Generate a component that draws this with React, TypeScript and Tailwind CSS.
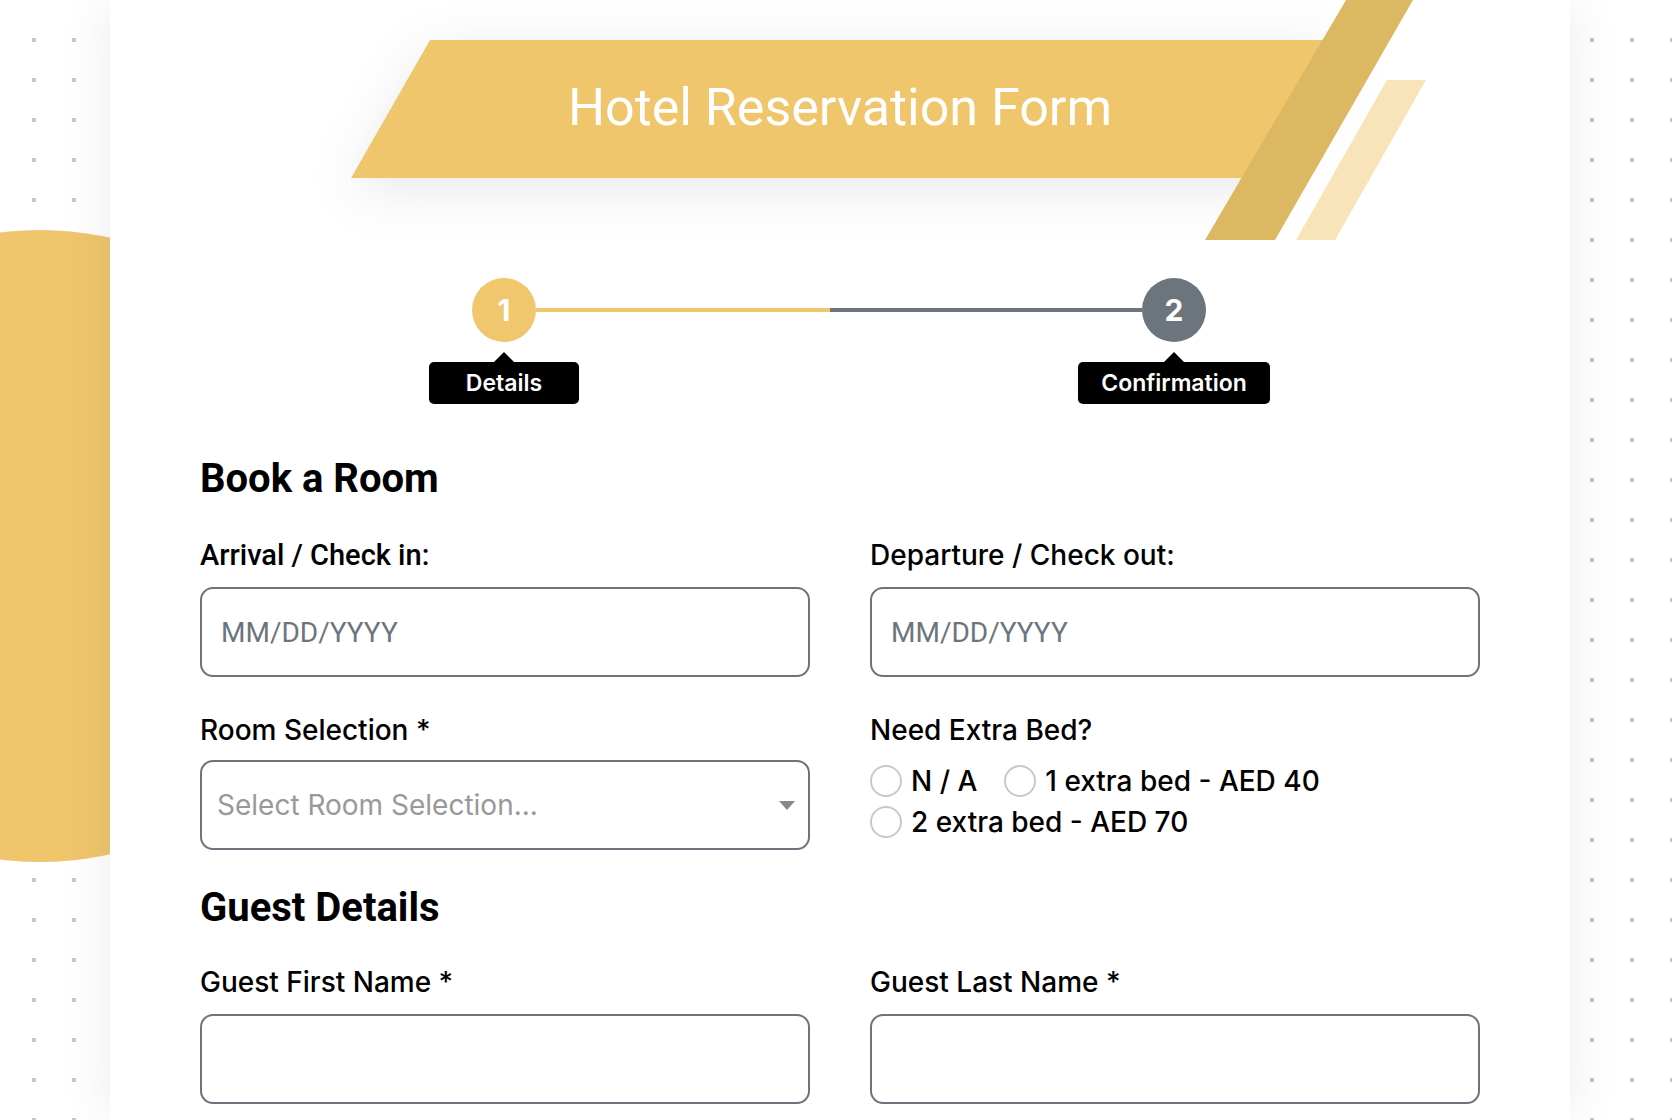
const rows = Array.from({ length: 28 }, (_, i) => i);

const DotGrid = ({ cols }: { cols: number }) => (
  <div
    className={
      cols === 2
        ? "grid w-max grid-cols-2 gap-[36px]"
        : "grid w-max grid-cols-3 gap-[36px]"
    }
  >
    {rows.flatMap((r) =>
      Array.from({ length: cols }, (_, c) => (
        <span key={`${r}-${c}`} className="block size-1 bg-[#c8c5c8]" />
      ))
    )}
  </div>
);

const Tooltip = ({ label, width }: { label: string; width: string }) => (
  <div className="flex flex-col items-center">
    <div className="h-0 w-0 border-x-[10px] border-b-[10px] border-x-transparent border-b-black" />
    <div
      className={`flex h-[42px] ${width} items-center justify-center rounded-[5px] bg-black text-[23px] font-semibold text-white`}
    >
      {label}
    </div>
  </div>
);

const Label = ({ children, roboto }: { children: React.ReactNode; roboto?: boolean }) => (
  <label
    className={
      roboto
        ? "block font-['Roboto',sans-serif] text-[29px] font-medium leading-[34px] text-black"
        : "block text-[28px] font-medium leading-[34px] text-black"
    }
  >
    {children}
  </label>
);

const TextInput = ({ placeholder }: { placeholder?: string }) => (
  <input
    className="mt-[15px] block h-[90px] w-full rounded-[13px] border-2 border-[#6c757d] bg-white px-[19px] font-['Roboto',sans-serif] text-[28px] text-black outline-none placeholder:text-[#6c757d]"
    placeholder={placeholder}
  />
);

const Radio = ({ label }: { label: string }) => (
  <label className="flex h-[41px] items-center gap-[9px]">
    <span className="block size-8 rounded-full border-2 border-[#c6c9cd] bg-white" />
    <span className="text-[28px] font-medium text-black">{label}</span>
  </label>
);

export default function App() {
  return (
    <div className="flex h-[1120px] overflow-hidden bg-white font-['Inter',sans-serif]">
      {/* LEFT GUTTER */}
      <div className="relative w-[110px] shrink-0 overflow-hidden pl-[32px] pt-[38px]">
        <DotGrid cols={2} />
        <div className="absolute left-[-276px] top-[230px] size-[632px] rounded-full bg-[#efc66c]" />
      </div>

      {/* CARD */}
      <div className="relative z-10 w-[1460px] shrink-0 bg-white shadow-[0_0_50px_rgba(0,0,0,0.08)]">
        {/* HEADER */}
        <div className="relative h-[240px]">
          <svg
            className="absolute left-0 top-0 overflow-visible"
            width="1460"
            height="240"
            viewBox="0 0 1460 240"
          >
            <defs>
              <filter id="bannerShadow" x="-20%" y="-80%" width="140%" height="260%">
                <feDropShadow dx="0" dy="12" stdDeviation="26" floodColor="#000" floodOpacity="0.09" />
              </filter>
            </defs>
            <polygon points="320,40 1240,40 1160,178 241,178" fill="#efc66c" filter="url(#bannerShadow)" />
            <polygon points="1236,0 1303,0 1165,240 1095,240" fill="#dcb862" />
            <polygon points="1277,80 1316,80 1225,240 1186,240" fill="#f8e4b8" />
          </svg>
          <h1 className="relative pt-[82px] text-center font-['Roboto',sans-serif] text-[52px] font-normal leading-[52px] text-white">
            Hotel Reservation Form
          </h1>
        </div>

        <div className="px-[90px]">
          {/* STEPS */}
          <div className="ml-[272px] mt-[38px] w-[734px]">
            <div className="flex items-center">
              <div className="flex size-16 items-center justify-center rounded-full bg-[#f0c76d] text-[30px] font-bold text-white">
                1
              </div>
              <div className="h-1 w-[294px] bg-[#f0c76d]" />
              <div className="h-1 flex-1 bg-[#6c757d]" />
              <div className="flex size-16 items-center justify-center rounded-full bg-[#6c757d] text-[30px] font-bold text-white">
                2
              </div>
            </div>
            <div className="mt-[10px] flex justify-between">
              <div className="-ml-[43px]">
                <Tooltip label="Details" width="w-[150px]" />
              </div>
              <div className="-mr-[64px]">
                <Tooltip label="Confirmation" width="w-[192px]" />
              </div>
            </div>
          </div>

          {/* BOOK A ROOM */}
          <h2 className="mt-[51px] font-['Roboto',sans-serif] text-[40px] font-bold leading-[48px] text-black">
            Book a Room
          </h2>

          <div className="mt-[35px] grid grid-cols-2 gap-x-[60px]">
            <div>
              <Label roboto>Arrival / Check in:</Label>
              <TextInput placeholder="MM/DD/YYYY" />
            </div>
            <div>
              <Label>Departure / Check out:</Label>
              <TextInput placeholder="MM/DD/YYYY" />
            </div>
          </div>

          <div className="mt-[36px] grid grid-cols-2 gap-x-[60px]">
            <div>
              <Label>Room Selection *</Label>
              <div className="mt-[13px] flex h-[90px] items-center justify-between rounded-[13px] border-2 border-[#6c757d] pl-[15px] pr-[13px]">
                <span className="text-[28px] text-[#999999]">Select Room Selection...</span>
                <svg width="16" height="9" viewBox="0 0 16 9">
                  <polygon points="0,0 16,0 8,9" fill="#888888" />
                </svg>
              </div>
            </div>
            <div>
              <Label>Need Extra Bed?</Label>
              <div className="mt-[13px] flex flex-wrap gap-x-[27px]">
                <Radio label="N / A" />
                <Radio label="1 extra bed - AED 40" />
                <Radio label="2 extra bed - AED 70" />
              </div>
            </div>
          </div>

          {/* GUEST DETAILS */}
          <h2 className="mt-[34px] font-['Roboto',sans-serif] text-[40px] font-bold leading-[48px] text-black">
            Guest Details
          </h2>

          <div className="mt-[33px] grid grid-cols-2 gap-x-[60px]">
            <div>
              <Label>Guest First Name *</Label>
              <TextInput />
            </div>
            <div>
              <Label>Guest Last Name *</Label>
              <TextInput />
            </div>
          </div>
        </div>
      </div>

      {/* RIGHT GUTTER */}
      <div className="w-[102px] shrink-0 overflow-hidden pl-[20px] pt-[38px]">
        <DotGrid cols={3} />
      </div>
    </div>
  );
}
